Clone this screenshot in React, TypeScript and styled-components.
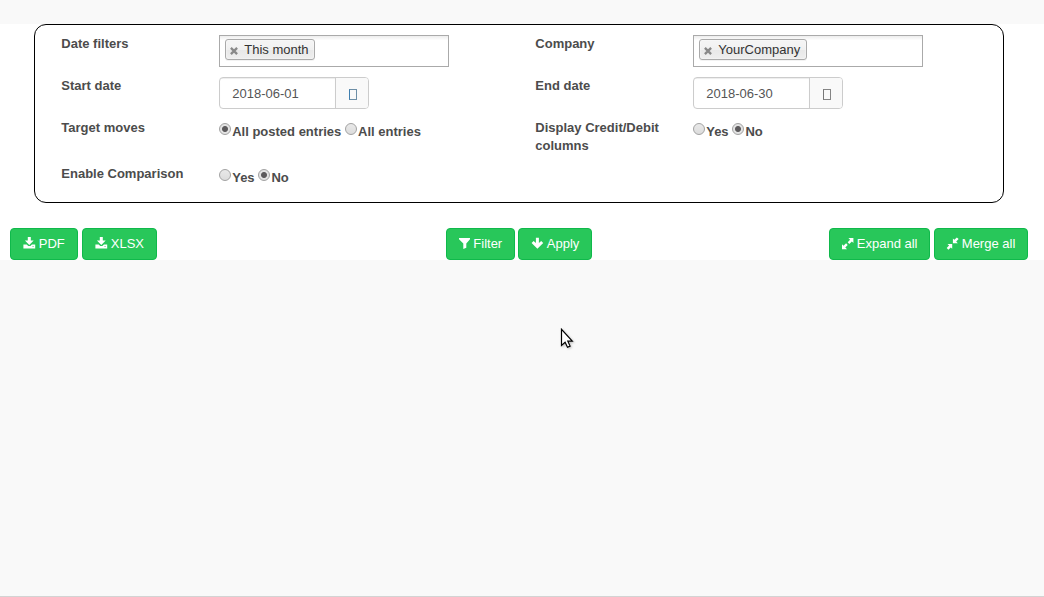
import React from "react";
import styled, { createGlobalStyle } from "styled-components";

const GlobalStyle = createGlobalStyle`
  * { box-sizing: border-box; }
  body {
    margin: 0;
    background: #f9f9f9;
    color: #4c4c4c;
    font: 13px/18px "Liberation Sans", Arial, sans-serif;
  }
`;

const Page = styled.main`
  display: flex;
  flex-direction: column;
  height: 597px;
  padding-top: 24px;
  border-bottom: 1px solid #d3d3d3;
  overflow: hidden;
`;

const Report = styled.section`
  background: #fff;
  height: 236px;
`;

const FilterPanel = styled.form`
  display: grid;
  grid-template-columns: 158px 316px 158px 1fr;
  grid-template-rows: 32px 32px 36px 27px;
  row-gap: 10px;
  height: 179px;
  margin: 0 40px 0 34px;
  padding: 10px 26px;
  border: 1px solid #000;
  border-radius: 12px;
`;

const FieldLabel = styled.div`
  font-weight: bold;
  max-width: 138px;
  padding-left: 0.3px;
`;

const TagBox = styled.div`
  width: 230px;
  height: 32px;
  padding: 3px 5px;
  border: 1px solid #aaa;
  background: linear-gradient(#eee 1%, #fff 15%);
`;

const Tag = styled.span`
  display: inline-flex;
  align-items: center;
  height: 21px;
  padding: 0 5.4px 0 4px;
  border: 1px solid #aaa;
  border-radius: 3px;
  background: linear-gradient(#f4f4f4 20%, #f0f0f0 50%, #e8e8e8 52%, #eee 100%);
  box-shadow: 0 0 2px #fff inset, 0 1px 0 rgba(0, 0, 0, 0.05);
  color: #333;
  line-height: 13px;
  vertical-align: top;

  svg { margin: 2px 6.3px 0 0; }
`;

const DateGroup = styled.div`
  display: flex;
  width: 150px;
  height: 32px;
  border: 1px solid #ccc;
  border-radius: 4px;
  overflow: hidden;
  background: #fff;
`;

const DateValue = styled.div`
  flex: 1;
  padding: 7px 12.3px;
  color: #555;
  box-shadow: inset 0 1px 1px rgba(0, 0, 0, 0.075);
`;

const DateAddon = styled.div`
  display: flex;
  align-items: center;
  justify-content: center;
  width: 33px;
  padding: 3px 0 0 1px;
  border-left: 1px solid #ccc;
  background: #f9f9f9;
`;

const MissingGlyph = styled.i<{ $color: string; $side: string }>`
  width: 8px;
  height: 11px;
  border: 1px solid ${(p) => p.$color};
  border-left-color: ${(p) => p.$side};
`;

const Options = styled.div`
  display: flex;
  gap: 3.6px;
  padding-top: 3px;
  font-weight: bold;
  white-space: nowrap;
`;

const Option = styled.label`
  display: flex;
  height: 18px;
`;

const Radio = styled.span<{ $checked?: boolean }>`
  width: 12px;
  height: 12px;
  margin: 1px 1.2px 0 0;
  border: 1px solid #a2a2a2;
  border-radius: 50%;
  background: ${(p) =>
    p.$checked
      ? "radial-gradient(circle, #5c5a5c 0 2.5px, #e3e3e3 3.5px)"
      : "linear-gradient(#e9e9e9, #dcdcdc)"};
`;

const OptionText = styled.span`
  padding-top: 1px;
`;

const Toolbar = styled.div`
  display: grid;
  grid-template-columns: 436px 383px 1fr;
  padding: 25px 0 0 10px;
`;

const ButtonGroup = styled.div<{ $gap?: number }>`
  display: flex;
  gap: ${(p) => p.$gap ?? 4}px;
`;

const Button = styled.button<{ $width: number; $inset?: number }>`
  display: flex;
  align-items: center;
  gap: 2.8px;
  width: ${(p) => p.$width}px;
  height: 32px;
  padding: 0 0 1px ${(p) => p.$inset ?? 12}px;
  border: 1px solid #0fb94b;
  border-radius: 4px;
  background: #28c75a;
  color: #fff;
  font: inherit;
  white-space: nowrap;

  svg { flex: none; }
`;

const Pointer = styled.svg`
  position: absolute;
  left: 560px;
  top: 328px;
  filter: drop-shadow(1px 1px 1px rgba(0, 0, 0, 0.25));
`;

const icons = {
  save: "M4.8 0h3v3.6h2.9L6.3 8 1.9 3.6h2.9zM.4 7.5h3.3L5.3 9h2l1.6-1.5h3.3v3.9H.4zM9.3 9.4v.7h1.6v-.7z",
  filter: "M1 1h11v1.2L8.3 6.4v4.4l-3 1.3V6.4L1 2.2z",
  down: "M4.9 .8h3v5.1l2.3-2 2 2-5.8 5.8L.6 5.9l2-2 2.3 2z",
  expand: "M7.4 1h5v5l-1.5-1.5-2.6 2.4-1.6-1.6L9.1 2.7zM6 12.2H1v-5l1.5 1.5 2.6-2.4 1.6 1.6-2.4 2.6z",
  merge: "M6.9 1.4l1.4 1.4L10.9 .4 12.6 2.1 10.2 4.6l1.6 1.6H6.9zM6.2 11.8l-1.4-1.4-2.4 2.4L.7 11.1l2.4-2.5-1.6-1.6h4.7z",
};

const Icon = ({ name }: { name: keyof typeof icons }) => (
  <svg width="13" height="13" viewBox="0 0 13 13" fill="#fff" fillRule="evenodd">
    <path d={icons[name]} />
  </svg>
);

const TagField = ({ text }: { text: string }) => (
  <TagBox>
    <Tag>
      <svg width="8" height="8" viewBox="0 0 8 8" stroke="#888" strokeWidth="2.3">
        <path d="M.9 .9l6.2 6.2M7.1 .9L.9 7.1" />
      </svg>
      {text}
    </Tag>
  </TagBox>
);

const DateField = ({ value, color, side }: { value: string; color: string; side: string }) => (
  <DateGroup>
    <DateValue>{value}</DateValue>
    <DateAddon>
      <MissingGlyph $color={color} $side={side} />
    </DateAddon>
  </DateGroup>
);

const RadioField = ({ options, selected }: { options: string[]; selected: string }) => (
  <Options>
    {options.map((option) => (
      <Option key={option}>
        <Radio $checked={option === selected} />
        <OptionText>{option}</OptionText>
      </Option>
    ))}
  </Options>
);

export default function App() {
  return (
    <Page>
      <GlobalStyle />
      <Report>
        <FilterPanel>
          <FieldLabel>Date filters</FieldLabel>
          <TagField text="This month" />
          <FieldLabel>Company</FieldLabel>
          <TagField text="YourCompany" />
          <FieldLabel>Start date</FieldLabel>
          <DateField value="2018-06-01" color="#6d8ea6" side="#3f7fb0" />
          <FieldLabel>End date</FieldLabel>
          <DateField value="2018-06-30" color="#858585" side="#777" />
          <FieldLabel>Target moves</FieldLabel>
          <RadioField options={["All posted entries", "All entries"]} selected="All posted entries" />
          <FieldLabel>Display Credit/Debit columns</FieldLabel>
          <RadioField options={["Yes", "No"]} selected="No" />
          <FieldLabel>Enable Comparison</FieldLabel>
          <RadioField options={["Yes", "No"]} selected="No" />
        </FilterPanel>
        <Toolbar>
          <ButtonGroup>
            <Button type="button" $width={68}><Icon name="save" />PDF</Button>
            <Button type="button" $width={75}><Icon name="save" />XLSX</Button>
          </ButtonGroup>
          <ButtonGroup $gap={3}>
            <Button type="button" $width={69} $inset={10.5}><Icon name="filter" />Filter</Button>
            <Button type="button" $width={74}><Icon name="down" />Apply</Button>
          </ButtonGroup>
          <ButtonGroup>
            <Button type="button" $width={101} $inset={11}><Icon name="expand" />Expand all</Button>
            <Button type="button" $width={94} $inset={11}><Icon name="merge" />Merge all</Button>
          </ButtonGroup>
        </Toolbar>
      </Report>
      <Pointer width="15" height="22" viewBox="0 0 15 22">
        <path
          d="M1.5 1.3v16.2l3.6-3.3 2.4 5.1 2.6-1.2-2.3-4.9h4.5z"
          fill="#fff"
          stroke="#000"
          strokeWidth="1.2"
        />
      </Pointer>
    </Page>
  );
}
